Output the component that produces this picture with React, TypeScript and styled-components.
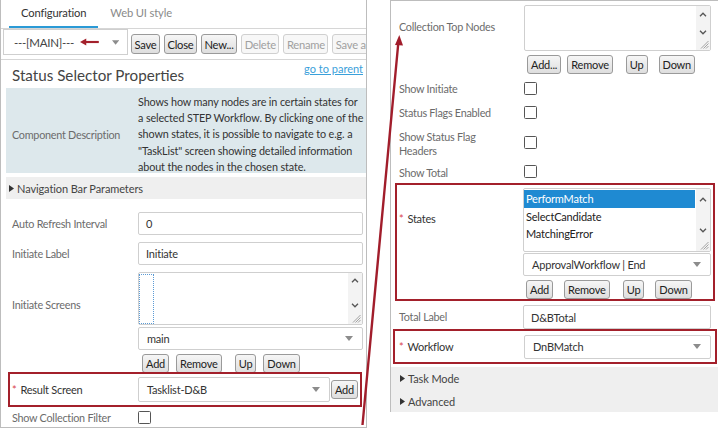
import React from 'react';
import styled, { createGlobalStyle } from 'styled-components';

const GlobalStyle = createGlobalStyle`
  *, *::before, *::after { box-sizing: border-box; }
  html, body { margin: 0; padding: 0; background: #fff; }
  body {
    font-family: Lato, "Open Sans", Arial, sans-serif;
    font-size: 10.8px;
    letter-spacing: -0.25px;
    color: #333;
    width: 718px;
    height: 430px;
    overflow: hidden;
  }
  button { font-family: inherit; letter-spacing: inherit; }
`;

const Page = styled.div`
  position: relative;
  width: 718px;
  height: 430px;
  display: flex;
  align-items: flex-start;
  gap: 23px;
`;

const LeftPanel = styled.div`
  width: 367px;
  height: 428px;
  flex-shrink: 0;
  border: 1px solid #bdbdbd;
  border-top: none;
  overflow: hidden;
  display: flex;
  flex-direction: column;
`;

const RightPanel = styled.div`
  width: 328px;
  height: 412px;
  flex-shrink: 0;
  border: 1px solid #bdbdbd;
  border-right: none;
  display: flex;
  flex-direction: column;
  padding-top: 4px;
`;

const TabBar = styled.div`
  height: 29px;
  flex-shrink: 0;
  display: flex;
  padding-left: 8px;
  border-bottom: 1px solid #d6d6d6;
`;

const Tab = styled.div<{ $active?: boolean }>`
  height: 28px;
  padding: 0 12px 2px;
  display: flex;
  align-items: center;
  font-size: 11.2px;
  letter-spacing: -0.15px;
  color: ${p => (p.$active ? '#333' : '#8a8a8a')};
  border-bottom: 2px solid ${p => (p.$active ? '#2b9ad6' : 'transparent')};
`;

const Toolbar = styled.div`
  height: 31px;
  flex-shrink: 0;
  display: flex;
  align-items: center;
  gap: 4px;
  padding-left: 2px;
  border-bottom: 1px solid #d6d6d6;
  white-space: nowrap;
  overflow: hidden;
`;

const ConfigSelect = styled.div`
  width: 125px;
  height: 26px;
  flex-shrink: 0;
  align-self: flex-start;
  margin-right: -1px;
  border: 1px solid #cfcfcf;
  display: flex;
  align-items: center;
  padding: 0 8px 0 10px;
  font-size: 11.5px;
  color: #444;
  gap: 6px;
`;

const ToolButton = styled.button<{ $disabled?: boolean }>`
  height: 20px;
  flex-shrink: 0;
  padding: 0 2.5px;
  font-size: 11.2px;
  border-radius: 3px;
  border: 1px solid ${p => (p.$disabled ? '#d0d0d0' : '#9a9a9a')};
  color: ${p => (p.$disabled ? '#a0a0a0' : '#222')};
  background: ${p => (p.$disabled ? '#f7f7f7' : 'linear-gradient(#f6f6f6, #dedede)')};
`;

const TitleRow = styled.div`
  height: 28px;
  flex-shrink: 0;
  display: flex;
  justify-content: space-between;
  align-items: center;
  padding: 0 3px 0 11px;
`;

const Title = styled.div`
  font-size: 15.2px;
  letter-spacing: 0;
  color: #444;
  margin-top: 1px;
`;

const ParentLink = styled.a`
  font-size: 11px;
  letter-spacing: 0;
  color: #3aa0da;
  text-decoration: underline;
  align-self: flex-start;
  margin-top: 2px;
`;

const DescBox = styled.div`
  margin-left: 5px;
  height: 85px;
  flex-shrink: 0;
  background: #dde8ec;
  display: grid;
  grid-template-columns: 132px 1fr;
  align-items: center;
`;

const DescLabel = styled.div`
  padding-left: 6px;
  padding-top: 6px;
  color: #6b6b6b;
`;

const DescText = styled.div`
  align-self: start;
  padding-top: 6px;
  color: #333;
  font-size: 10.8px;
  letter-spacing: -0.12px;
  line-height: 16.2px;
`;

const DescLine = styled.div`
  white-space: nowrap;
`;

const Section = styled.div<{ $ml?: number; $mt?: number; $pl?: number }>`
  margin-left: ${p => p.$ml ?? 0}px;
  margin-top: ${p => p.$mt ?? 0}px;
  background: #efefef;
  padding-left: ${p => p.$pl ?? 2}px;
  flex-shrink: 0;
`;

const SectionItem = styled.div<{ $h: number }>`
  height: ${p => p.$h}px;
  display: flex;
  align-items: center;
  gap: 3px;
  font-size: 11px;
  letter-spacing: -0.1px;
  color: #444;
`;

const Form = styled.div<{ $pl: number; $pr: number }>`
  padding: 0 ${p => p.$pr}px 0 ${p => p.$pl}px;
  display: flex;
  flex-direction: column;
  flex-shrink: 0;
`;

const Row = styled.div<{ $h?: number; $mt?: number; $lw?: number }>`
  display: grid;
  grid-template-columns: ${p => p.$lw ?? 126}px 1fr;
  align-items: center;
  min-height: ${p => p.$h ?? 0}px;
  margin-top: ${p => p.$mt ?? 0}px;
`;

const Label = styled.div<{ $pt?: number }>`
  color: #6b6b6b;
  line-height: 14px;
  align-self: ${p => (p.$pt != null ? 'start' : 'center')};
  padding-top: ${p => p.$pt ?? 0}px;
`;

const Req = styled.span`
  color: #d9434b;
  margin-right: 4px;
`;

const ReqLabel = styled.div<{ $pt?: number }>`
  color: #333;
  font-size: 11px;
  align-self: ${p => (p.$pt != null ? 'start' : 'center')};
  padding-top: ${p => p.$pt ?? 0}px;
`;

const Highlight = styled.div<{ $ml: number; $mr: number; $mt?: number; $pl: number; $pr: number; $pt?: number; $h?: number }>`
  border: 2px solid #a3202b;
  margin: ${p => p.$mt ?? 0}px ${p => p.$mr}px 0 ${p => p.$ml}px;
  padding: ${p => p.$pt ?? 0}px ${p => p.$pr}px 0 ${p => p.$pl}px;
  ${p => (p.$h ? `height: ${p.$h}px;` : '')}
  display: flex;
  flex-direction: column;
  justify-content: ${p => (p.$pt != null ? 'flex-start' : 'center')};
`;

const Input = styled.div<{ $h?: number }>`
  height: ${p => p.$h ?? 23}px;
  border: 1px solid #cfcfcf;
  border-radius: 2px;
  background: #fff;
  display: flex;
  align-items: center;
  padding-left: 7px;
  font-size: 11px;
  letter-spacing: -0.2px;
  color: #333;
`;

const SelectBox = styled.div<{ $h?: number; $mt?: number }>`
  height: ${p => p.$h ?? 23}px;
  margin-top: ${p => p.$mt ?? 0}px;
  border: 1px solid #cfcfcf;
  border-radius: 2px;
  background: #fff;
  display: flex;
  align-items: center;
  justify-content: space-between;
  padding: 0 9px 0 8px;
  font-size: 11px;
  letter-spacing: -0.2px;
  color: #333;
`;

const ListArea = styled.div<{ $h: number }>`
  position: relative;
  height: ${p => p.$h}px;
  border: 1px solid #cfcfcf;
  border-radius: 2px;
  background: #fff;
  padding: 1px 15px 0 0;
`;

const ScrollTrack = styled.div<{ $up: number; $down: number }>`
  position: absolute;
  top: 0;
  right: 0;
  bottom: 0;
  width: 14px;
  background: #f3f3f3;
  & > .up { position: absolute; left: 3px; top: ${p => p.$up}px; }
  & > .down { position: absolute; left: 3px; bottom: ${p => p.$down}px; }
  & > .grip { position: absolute; right: 1px; bottom: 1px; }
`;

const FocusOption = styled.div`
  width: 15px;
  height: 100%;
  border: 1px dotted #5b9bd5;
`;

const ListItem = styled.div<{ $selected?: boolean }>`
  height: 17.5px;
  line-height: 17px;
  padding-left: 2px;
  font-size: 11px;
  letter-spacing: -0.2px;
  color: ${p => (p.$selected ? '#fff' : '#222')};
  background: ${p => (p.$selected ? '#1f8ad2' : 'transparent')};
`;

const BtnBar = styled.div<{ $mt?: number; $pl?: number }>`
  display: flex;
  align-items: center;
  margin-top: ${p => p.$mt ?? 4}px;
  padding-left: ${p => p.$pl ?? 4}px;
  height: 19px;
`;

const SmallBtn = styled.button<{ $ml?: number }>`
  height: 19px;
  min-width: 21px;
  padding: 0 3px;
  margin-left: ${p => p.$ml ?? 0}px;
  font-size: 11px;
  letter-spacing: -0.2px;
  color: #222;
  border: 1px solid #9a9a9a;
  border-radius: 3px;
  background: linear-gradient(#f6f6f6, #dedede);
  flex-shrink: 0;
`;

const Inline = styled.div`
  display: flex;
  align-items: center;
  gap: 1px;
`;

const Check = styled.span`
  display: inline-block;
  width: 13px;
  height: 13px;
  border: 1px solid #555;
  border-radius: 1.5px;
  background: #fff;
`;

const Overlay = styled.svg`
  position: absolute;
  left: 0;
  top: 0;
  pointer-events: none;
`;

const Caret = () => (
  <svg width="8" height="5" viewBox="0 0 8 5">
    <polygon points="0,0 8,0 4,5" fill="#8c8c8c" />
  </svg>
);

const Disclosure = () => (
  <svg width="5" height="7" viewBox="0 0 5 7">
    <polygon points="0,0 5,3.5 0,7" fill="#333" />
  </svg>
);

const ChevUp = () => (
  <svg className="up" width="8" height="5" viewBox="0 0 8 5">
    <path d="M1 4.3 L4 1.2 L7 4.3" stroke="#555" strokeWidth="1.3" fill="none" />
  </svg>
);

const ChevDown = () => (
  <svg className="down" width="8" height="5" viewBox="0 0 8 5">
    <path d="M1 0.8 L4 3.8 L7 0.8" stroke="#555" strokeWidth="1.3" fill="none" />
  </svg>
);

const Grip = () => (
  <svg className="grip" width="9" height="9" viewBox="0 0 9 9">
    <path d="M8.5 1 L1 8.5 M8.5 3.5 L3.5 8.5 M8.5 6 L6 8.5" stroke="#999" strokeWidth="0.9" />
  </svg>
);

const Scroll = ({ up, down }: { up: number; down: number }) => (
  <ScrollTrack $up={up} $down={down}>
    <ChevUp />
    <ChevDown />
    <Grip />
  </ScrollTrack>
);

const SmallArrow = () => (
  <svg width="22" height="8" viewBox="0 0 22 8">
    <line x1="5" y1="4" x2="21" y2="4" stroke="#a3202b" strokeWidth="2.4" />
    <polygon points="0,4 7,0 7,8" fill="#a3202b" />
  </svg>
);

export default function App() {
  return (
    <>
      <GlobalStyle />
      <Page>
        <LeftPanel>
          <TabBar>
            <Tab $active>Configuration</Tab>
            <Tab>Web UI style</Tab>
          </TabBar>
          <Toolbar>
            <ConfigSelect>
              <span>---[MAIN]---</span>
              <SmallArrow />
              <span style={{ flex: 1 }} />
              <Caret />
            </ConfigSelect>
            <ToolButton>Save</ToolButton>
            <ToolButton>Close</ToolButton>
            <ToolButton>New...</ToolButton>
            <ToolButton $disabled>Delete</ToolButton>
            <ToolButton $disabled>Rename</ToolButton>
            <ToolButton $disabled>Save as...</ToolButton>
          </Toolbar>
          <TitleRow>
            <Title>Status Selector Properties</Title>
            <ParentLink>go to parent</ParentLink>
          </TitleRow>
          <DescBox>
            <DescLabel>Component Description</DescLabel>
            <DescText>
              <DescLine>Shows how many nodes are in certain states for</DescLine>
              <DescLine>a selected STEP Workflow. By clicking one of the</DescLine>
              <DescLine>shown states, it is possible to navigate to e.g. a</DescLine>
              <DescLine>"TaskList" screen showing detailed information</DescLine>
              <DescLine>about the nodes in the chosen state.</DescLine>
            </DescText>
          </DescBox>
          <Section $ml={5} $mt={4} $pl={3}>
            <SectionItem $h={22}>
              <Disclosure />
              <span>Navigation Bar Parameters</span>
            </SectionItem>
          </Section>
          <Form $pl={11} $pr={3}>
            <Row $mt={13}>
              <Label>Auto Refresh Interval</Label>
              <Input>0</Input>
            </Row>
            <Row $mt={7}>
              <Label>Initiate Label</Label>
              <Input>Initiate</Input>
            </Row>
            <Row $mt={7}>
              <Label $pt={26}>Initiate Screens</Label>
              <div>
                <ListArea $h={53}>
                  <FocusOption />
                  <Scroll up={5} down={16} />
                </ListArea>
                <SelectBox $mt={2}>
                  <span>main</span>
                  <Caret />
                </SelectBox>
                <BtnBar>
                  <SmallBtn>Add</SmallBtn>
                  <SmallBtn $ml={7}>Remove</SmallBtn>
                  <SmallBtn $ml={13}>Up</SmallBtn>
                  <SmallBtn $ml={7}>Down</SmallBtn>
                </BtnBar>
              </div>
            </Row>
            <Highlight $ml={-4} $mr={1} $mt={-1} $pl={2} $pr={2} $h={35}>
              <Row>
                <ReqLabel>
                  <Req>*</Req>Result Screen
                </ReqLabel>
                <Inline>
                  <SelectBox $h={25} style={{ flex: 1 }}>
                    <span>Tasklist-D&amp;B</span>
                    <Caret />
                  </SelectBox>
                  <SmallBtn>Add</SmallBtn>
                </Inline>
              </Row>
            </Highlight>
            <Row $h={20} $mt={1}>
              <Label>Show Collection Filter</Label>
              <div>
                <Check />
              </div>
            </Row>
          </Form>
        </LeftPanel>

        <RightPanel>
          <Form $pl={8} $pr={7}>
            <Row $lw={125}>
              <Label $pt={15}>Collection Top Nodes</Label>
              <div>
                <ListArea $h={46}>
                  <Scroll up={6} down={15} />
                </ListArea>
                <BtnBar $pl={3}>
                  <SmallBtn>Add...</SmallBtn>
                  <SmallBtn $ml={6}>Remove</SmallBtn>
                  <SmallBtn $ml={13}>Up</SmallBtn>
                  <SmallBtn $ml={11}>Down</SmallBtn>
                </BtnBar>
              </div>
            </Row>
            <Row $lw={125} $h={24} $mt={3}>
              <Label>Show Initiate</Label>
              <div><Check /></div>
            </Row>
            <Row $lw={125} $h={24}>
              <Label>Status Flags Enabled</Label>
              <div><Check /></div>
            </Row>
            <Row $lw={125} $h={37}>
              <Label>
                Show Status Flag
                <br />
                Headers
              </Label>
              <div><Check /></div>
            </Row>
            <Row $lw={125} $h={21}>
              <Label>Show Total</Label>
              <div><Check /></div>
            </Row>
            <Highlight $ml={-4} $mr={-4} $pl={2} $pr={2} $pt={3} $h={118}>
              <Row $lw={124}>
                <ReqLabel $pt={24}>
                  <Req>*</Req>States
                </ReqLabel>
                <div>
                  <ListArea $h={64}>
                    <ListItem $selected>PerformMatch</ListItem>
                    <ListItem>SelectCandidate</ListItem>
                    <ListItem>MatchingError</ListItem>
                    <Scroll up={8} down={18} />
                  </ListArea>
                  <SelectBox $mt={1}>
                    <span>ApprovalWorkflow | End</span>
                    <Caret />
                  </SelectBox>
                  <BtnBar $pl={3}>
                    <SmallBtn>Add</SmallBtn>
                    <SmallBtn $ml={11}>Remove</SmallBtn>
                    <SmallBtn $ml={13}>Up</SmallBtn>
                    <SmallBtn $ml={11}>Down</SmallBtn>
                  </BtnBar>
                </div>
              </Row>
            </Highlight>
            <Row $lw={124} $mt={4}>
              <Label>Total Label</Label>
              <Input $h={24}>D&amp;BTotal</Input>
            </Row>
            <Highlight $ml={-6} $mr={-6} $pl={4} $pr={4} $h={35}>
              <Row $lw={125}>
                <ReqLabel>
                  <Req>*</Req>Workflow
                </ReqLabel>
                <SelectBox $h={24}>
                  <span>DnBMatch</span>
                  <Caret />
                </SelectBox>
              </Row>
            </Highlight>
          </Form>
          <Section $mt={3} $pl={9}>
            <SectionItem $h={23}>
              <Disclosure />
              <span>Task Mode</span>
            </SectionItem>
            <SectionItem $h={22}>
              <Disclosure />
              <span>Advanced</span>
            </SectionItem>
          </Section>
        </RightPanel>

        <Overlay width="718" height="430" viewBox="0 0 718 430">
          <line x1="362.5" y1="425" x2="398.2" y2="44" stroke="#a11d2b" strokeWidth="2.4" />
          <polygon points="399.3,35 395,45 403,45.5" fill="#a11d2b" />
        </Overlay>
      </Page>
    </>
  );
}
